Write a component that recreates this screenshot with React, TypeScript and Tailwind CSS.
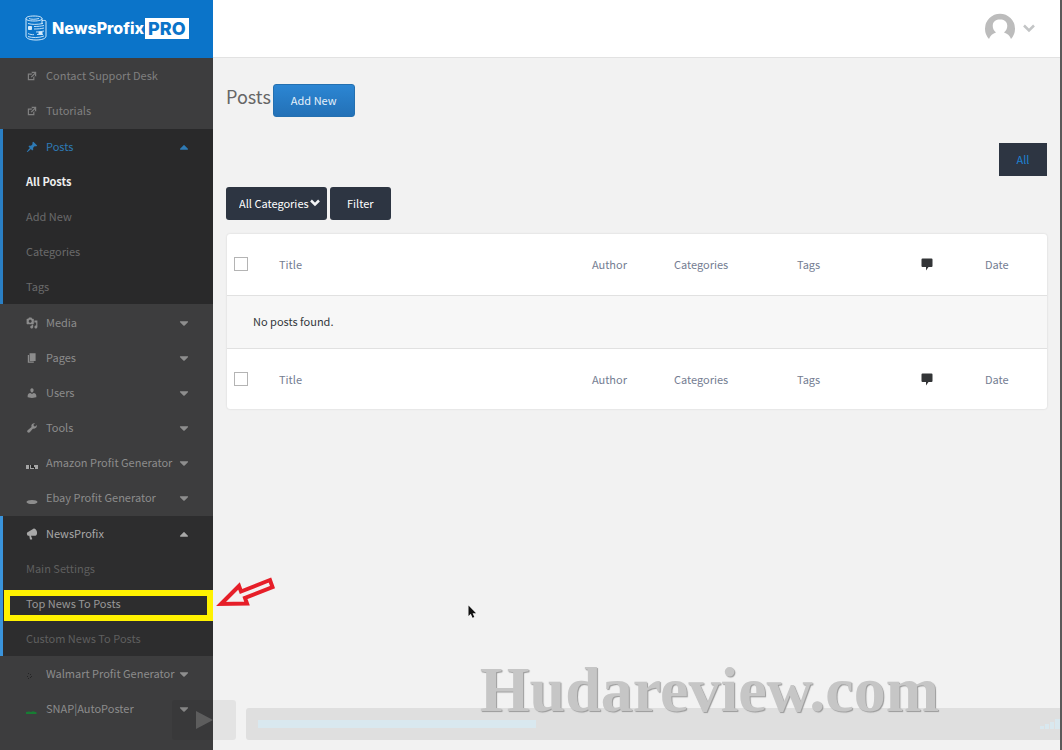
import type { ReactNode } from "react";
import { FaCaretDown, FaCaretUp } from "react-icons/fa";

const ICONS = {
  external:
    "M9 3h8v8l-2-1V6.92l-5.6 5.59-1.41-1.41L14.08 5H10zm3 12v-3l2-2v7H3V6h8L9 8H5v7h7z",
  pin: "M10.44 3.02l1.82-1.82 6.36 6.35-1.83 1.82c-1.05-.68-2.48-.57-3.41.36l-.75.75c-.92.93-1.04 2.35-.35 3.41l-1.83 1.82-2.41-2.41-2.8 2.79c-.42.42-3.38 2.71-3.8 2.29s1.86-3.39 2.28-3.81l2.79-2.79L4.1 9.36l1.83-1.82c1.05.69 2.48.57 3.4-.36l.75-.75c.93-.92 1.05-2.35.36-3.41z",
  media:
    "M13 11V4c0-.55-.45-1-1-1h-1.67L9 1H5L3.67 3H2c-.55 0-1 .45-1 1v7c0 .55.45 1 1 1h10c.55 0 1-.45 1-1zM7 4.5c1.38 0 2.5 1.12 2.5 2.5S8.38 9.5 7 9.5 4.5 8.38 4.5 7 5.62 4.5 7 4.5zM14 6h5v10.5c0 1.38-1.12 2.5-2.5 2.5S14 17.88 14 16.5s1.12-2.5 2.5-2.5c.17 0 .34.02.5.05V9h-3V6zm-4 8.05V13h2v3.5c0 1.38-1.12 2.5-2.5 2.5S7 17.88 7 16.5 8.12 14 9.5 14c.17 0 .34.02.5.05z",
  page: "M6 15V2h10v13H6zm-1 1h8v2H3V5h2v11z",
  user: "M10 9.25c-2.27 0-2.73-3.44-2.73-3.44C7 4.02 7.82 2 9.97 2c2.16 0 2.98 2.02 2.71 3.81 0 0-.41 3.44-2.68 3.44zm0 2.57L12.72 10c2.39 0 4.52 2.33 4.52 4.53v2.49s-3.65 1.13-7.24 1.13c-3.65 0-7.24-1.13-7.24-1.13v-2.49c0-2.25 1.94-4.48 4.47-4.48z",
  tools:
    "M16.68 9.77c-1.34 1.34-3.3 1.67-4.95.99l-5.41 6.52c-.99.99-2.59.99-3.58 0s-.99-2.59 0-3.57l6.52-5.42c-.68-1.65-.35-3.61.99-4.95 1.28-1.28 3.12-1.62 4.72-1.06l-2.89 2.89 2.82 2.82 2.86-2.87c.53 1.58.18 3.39-1.08 4.65z",
  megaphone:
    "M18.15 5.94c.46 1.62.38 3.22-.02 4.48-.42 1.28-1.26 2.18-2.3 2.48-.16.06-.26.06-.4.06-.06.02-.12.02-.18.02-.06.02-.14.02-.22.02h-6.8l2.22 5.5c.02.14-.06.26-.14.34-.08.1-.24.16-.34.16H6.95c-.1 0-.26-.06-.34-.16-.08-.08-.16-.2-.14-.34l-1-5.5H4.25l-.02-.02c-.5.06-1.08-.18-1.54-.62s-.88-1.08-1.06-1.88c-.24-.8-.2-1.56-.02-2.2.18-.62.58-1.08 1.06-1.3l.02-.02 9-5.4c.1-.06.18-.1.24-.16.06-.04.14-.08.24-.12.16-.08.28-.12.5-.18 1.04-.3 2.24.1 3.22.98s1.84 2.24 2.26 3.86z",
};

function MenuIcon({ name }: { name: keyof typeof ICONS }) {
  return (
    <svg viewBox="0 0 20 20" className="size-3" fill="currentColor">
      <path d={ICONS[name]} />
    </svg>
  );
}

// Small plugin logos
function AmazonMark() {
  return (
    <svg viewBox="0 0 12 12" className="size-3">
      <path fill="#a5a5a5" d="M0 8h12v4H0z" />
      <path fill="#2c2c2c" d="M3 8h1v4H3zM5 8h3v3H5zM8 10h1v2H8z" />
    </svg>
  );
}

function EbayMark() {
  return (
    <svg viewBox="0 0 12 12" className="size-3">
      <ellipse cx="6" cy="10" rx="5.5" ry="2" fill="#8d8d8d" />
    </svg>
  );
}

function WalmartMark() {
  return (
    <svg viewBox="0 0 12 12" className="size-3" fill="#252526">
      <path d="M2 5h1v1H2zM4 6h1v1H4zM1 8h1v1H1zM4 9h1v1H4zM2 10h1v1H2zM5 8h1v1H5z" />
    </svg>
  );
}

function SnapMark() {
  return (
    <svg viewBox="0 0 12 12" className="size-3">
      <path fill="#177d33" d="M0 9l3-.5 2 .5 2-.7 3.500 1V11H0z" />
    </svg>
  );
}

type ItemProps = {
  label: string;
  icon: ReactNode;
  arrow?: "up" | "down";
  color?: string;
};

function MenuItem({ label, icon, arrow, color = "text-[#8c8c8c]" }: ItemProps) {
  return (
    <li>
      <a href="#" className={`flex h-[35px] items-center pr-[22px] pl-[23px] ${color}`}>
        <span className="mr-2 w-3 shrink-0">{icon}</span>
        <span className="grow whitespace-nowrap">{label}</span>
        {arrow === "down" && <FaCaretDown className="size-3.5 shrink-0 text-[#8e8e8e]" />}
        {arrow === "up" && <FaCaretUp className="size-3.5 shrink-0" />}
      </a>
    </li>
  );
}

function SubItem({ label, color = "text-[#6a6a6a]" }: { label: string; color?: string }) {
  return (
    <li>
      <a href="#" className={`flex h-[35px] items-center pl-[23px] ${color}`}>
        {label}
      </a>
    </li>
  );
}

function Logo() {
  return (
    <a
      href="#"
      className="flex h-[58px] items-center bg-[#0b74c9] pb-0.5 pl-[25px] font-[Inter,sans-serif] text-white"
    >
      <svg viewBox="0 0 22 26" className="mr-[5px] h-[26px] w-[22px]" fill="none" stroke="#d5ebfb">
        <path d="M1 3.5c0-1.500 3-2.500 8-2.500s8 1 8 2.500-3 2.500-8 2.500-8-1-8-2.500zM1 3.500v17.500c0 2.500 4 4 10 4s10-1.500 10-4V6.500M17 3.500V9M21 6.500c0-1.500-2-1-4-1" />
        <path
          strokeWidth="0.9"
          d="M4 3.500c2 1 6 1 10 0M3 8.500c4 1.200 9 1.200 15 0M9 11.500c4 0 7-.3 10-1M9 14c4 0 7-.3 10-1M3 18.500c2 1 4 1.200 6 1.200M11 17c3 0 5-.3 8-1M3 21.500c4 1.500 11 1.500 16-.5M12 19.500h6"
        />
        <path fill="#d5ebfb" d="M3.500 11.500h3v3h-3zM14 17h3v2h-3z" />
      </svg>
      <span className="text-base leading-5 font-extrabold">NewsProfix</span>
      <span className="ml-px bg-white px-[3px] text-lg leading-[21px] font-extrabold text-[#0b74c9]">
        PRO
      </span>
    </a>
  );
}

function Sidebar() {
  return (
    <aside className="w-[213px] shrink-0 bg-[#3d3d3e]">
      <Logo />
      <nav>
        <ul className="border-l-[3px] border-[#3d3d3e] pb-px">
          <MenuItem label="Contact Support Desk" icon={<MenuIcon name="external" />} color="text-[#808080]" />
          <MenuItem label="Tutorials" icon={<MenuIcon name="external" />} color="text-[#808080]" />
        </ul>

        <ul className="border-l-[3px] border-[#2a7fc4] bg-[#29292a]">
          <MenuItem label="Posts" icon={<MenuIcon name="pin" />} arrow="up" color="text-[#2e7ab5]" />
          <SubItem label="All Posts" color="font-bold text-[#eeeeee]" />
          <SubItem label="Add New" />
          <SubItem label="Categories" />
          <SubItem label="Tags" />
        </ul>

        <ul className="border-l-[3px] border-[#3d3d3e] py-px">
          <MenuItem label="Media" icon={<MenuIcon name="media" />} arrow="down" />
          <MenuItem label="Pages" icon={<MenuIcon name="page" />} arrow="down" />
          <MenuItem label="Users" icon={<MenuIcon name="user" />} arrow="down" />
          <MenuItem label="Tools" icon={<MenuIcon name="tools" />} arrow="down" />
          <MenuItem label="Amazon Profit Generator" icon={<AmazonMark />} arrow="down" />
          <MenuItem label="Ebay Profit Generator" icon={<EbayMark />} arrow="down" />
        </ul>

        <ul className="border-l-[3px] border-[#3a94dc] bg-[#2d2d2e]">
          <MenuItem label="NewsProfix" icon={<MenuIcon name="megaphone" />} arrow="up" color="text-[#a8a8a8]" />
          <SubItem label="Main Settings" color="text-[#5f5f5f]" />
          <li className="relative">
            <a href="#" className="flex h-[35px] items-center pl-[23px] text-[#989898]">
              Top News To Posts
            </a>
            {/* Highlight and pointer */}
            <span className="pointer-events-none absolute top-1 right-0 bottom-0 left-px border-[6px] border-[#fff200]" />
            <svg
              viewBox="0 0 60 32"
              className="pointer-events-none absolute -top-2.5 left-full z-10 ml-[3px] h-8 w-[60px]"
            >
              <path
                d="M5 28 23 10 25 15.500 54 4 56.500 11 29 22 31 27.500z"
                fill="#f4f0f0"
                stroke="#e61e28"
                strokeWidth="4"
              />
            </svg>
          </li>
          <SubItem label="Custom News To Posts" color="text-[#5f5f5f]" />
        </ul>

        <ul className="border-l-[3px] border-[#3d3d3e]">
          <MenuItem label="Walmart Profit Generator" icon={<WalmartMark />} arrow="down" />
          <MenuItem label="SNAP|AutoPoster" icon={<SnapMark />} arrow="down" />
        </ul>
      </nav>
    </aside>
  );
}

function TopBar() {
  return (
    <header className="flex h-[58px] items-center justify-end border-b border-[#e2e2e2] bg-white pr-[25px] pb-0.5">
      <button aria-label="Account" className="flex items-center gap-2">
        <svg viewBox="0 0 30 30" className="size-[30px]">
          <path
            fill="#bcbcbc"
            d="M4 26A15 15 0 1 1 26 26C25 22.500 22 20.500 19 19.500C21.500 17.500 22.500 15 22.200 12C22 8.500 19 6.500 15 6.500S8 8.500 7.800 12C7.500 15 8.500 17.500 11 19.500C8 20.500 5 22.500 4 26z"
          />
        </svg>
        <svg viewBox="0 0 12 12" className="size-3" fill="none" stroke="#c3c5c6" strokeWidth="2.5">
          <path d="m1 3.500 5 5 5-5" />
        </svg>
      </button>
    </header>
  );
}

function HeadingRow({ id }: { id: string }) {
  return (
    <tr className="h-[61px] text-left text-[#747d92]">
      <td className="pl-[7px]">
        <input
          id={id}
          type="checkbox"
          aria-label="Select all"
          className="block size-3.5 appearance-none border border-[#b4b4b4] bg-white"
        />
      </td>
      <th className="font-normal">Title</th>
      <th className="font-normal">Author</th>
      <th className="font-normal">Categories</th>
      <th className="font-normal">Tags</th>
      <th aria-label="Comments">
        <svg viewBox="0 0 12 14" className="h-3.5 w-3" fill="#333537">
          <path d="M1.500 1.500h9a1 1 0 0 1 1 1v6.500a1 1 0 0 1-1 1H7.500L5 13.500V10H1.500a1 1 0 0 1-1-1v-6.500a1 1 0 0 1 1-1z" />
        </svg>
      </th>
      <th className="font-normal">Date</th>
    </tr>
  );
}

function PostsTable() {
  return (
    <div className="mt-[14px] ml-px overflow-hidden rounded-[3px] bg-white shadow-[0_0_2px_rgba(0,0,0,0.15)]">
      <table className="w-full table-fixed">
        <colgroup>
          <col className="w-[52px]" />
          <col />
          <col className="w-[82px]" />
          <col className="w-[123px]" />
          <col className="w-[124px]" />
          <col className="w-16" />
          <col className="w-[62px]" />
        </colgroup>
        <thead>
          <HeadingRow id="select-top" />
        </thead>
        <tbody>
          <tr className="h-[53px] border-y border-[#e1e1e1] bg-[#f7f7f7]">
            <td colSpan={7} className="pl-[26px] text-[#33373b]">
              No posts found.
            </td>
          </tr>
        </tbody>
        <tfoot>
          <HeadingRow id="select-bottom" />
        </tfoot>
      </table>
    </div>
  );
}

function PlayerBar() {
  return (
    <div className="pointer-events-none absolute right-0 bottom-2.5 left-[172px] flex items-end gap-2.5">
      <div className="flex h-10 w-16 items-center justify-center rounded-[3px] bg-black/6">
        <svg viewBox="0 0 18 20" className="h-5 w-[18px]" fill="#8a8a8a" fillOpacity="0.45">
          <path d="M1 1 18 10 1 19z" />
        </svg>
      </div>
      <div className="flex h-8 grow items-center rounded-l-[3px] bg-[#dfdfdf] pl-3">
        <div className="h-2 w-[278px] bg-[#d9e8ef]" />
        <svg viewBox="0 0 20 12" className="ml-auto h-3 w-5" fill="#d9e8ef">
          <path d="M0 8h4v3H0zM5 6h4v5H5zM10 4h4v7h-4zM15 1h5v10h-5z" />
        </svg>
      </div>
    </div>
  );
}

export default function App() {
  return (
    <div className="relative flex min-h-screen overflow-hidden border-r-2 border-[#5a5a5a] bg-[#f2f2f2] font-['Noto_Sans_CJK_SC',sans-serif] text-[11px]">
      <Sidebar />

      <div className="min-w-0 grow">
        <TopBar />

        <main className="pt-[26px] pr-[13px] pl-[13px]">
          <div className="flex items-start gap-0.5">
            <h1 className="text-lg leading-6 text-[#666666]">Posts</h1>
            <button className="h-[33px] rounded-[3px] border border-[#2470b0] bg-linear-to-b from-[#2c86d3] to-[#2371b7] px-[17px] text-[#e6f1fa]">
              Add New
            </button>
          </div>

          <div className="mt-[26px] flex justify-end">
            <button className="h-[33px] w-12 bg-[#2d3542] text-[#1d82d2]">All</button>
          </div>

          {/* Filters */}
          <div className="mt-[11px] flex gap-[3px]">
            <div className="relative">
              <select
                aria-label="Filter by category"
                className="h-[33px] w-[101px] appearance-none rounded-[3px] bg-[#2d3542] pl-[13px] text-white"
              >
                <option>All Categories</option>
              </select>
              <svg
                viewBox="0 0 10 8"
                className="pointer-events-none absolute top-3 right-[7px] h-2 w-2.5"
                fill="none"
                stroke="#f2f4f6"
                strokeWidth="2.5"
              >
                <path d="m1 1.500 4 4 4-4" />
              </svg>
            </div>
            <button className="h-[33px] rounded-[3px] bg-[#2d3542] px-[17px] text-white">
              Filter
            </button>
          </div>

          <PostsTable />
        </main>
      </div>

      <PlayerBar />

      {/* Watermark */}
      <p className="pointer-events-none absolute right-[121px] bottom-[22px] font-['Liberation_Serif',serif] text-[64px] leading-[76px] font-bold text-[#c6c6c6] [text-shadow:1px_1px_1px_#9a9a9a]">
        Hudareview.com
      </p>

      {/* Mouse pointer */}
      <svg viewBox="0 0 9 14" className="pointer-events-none absolute top-[605px] left-[468px] h-3.5 w-[9px]">
        <path d="M.5.5V11l2.300-2.200 1.700 4 1.800-.8-1.700-3.800H8z" fill="#111" />
      </svg>
    </div>
  );
}
